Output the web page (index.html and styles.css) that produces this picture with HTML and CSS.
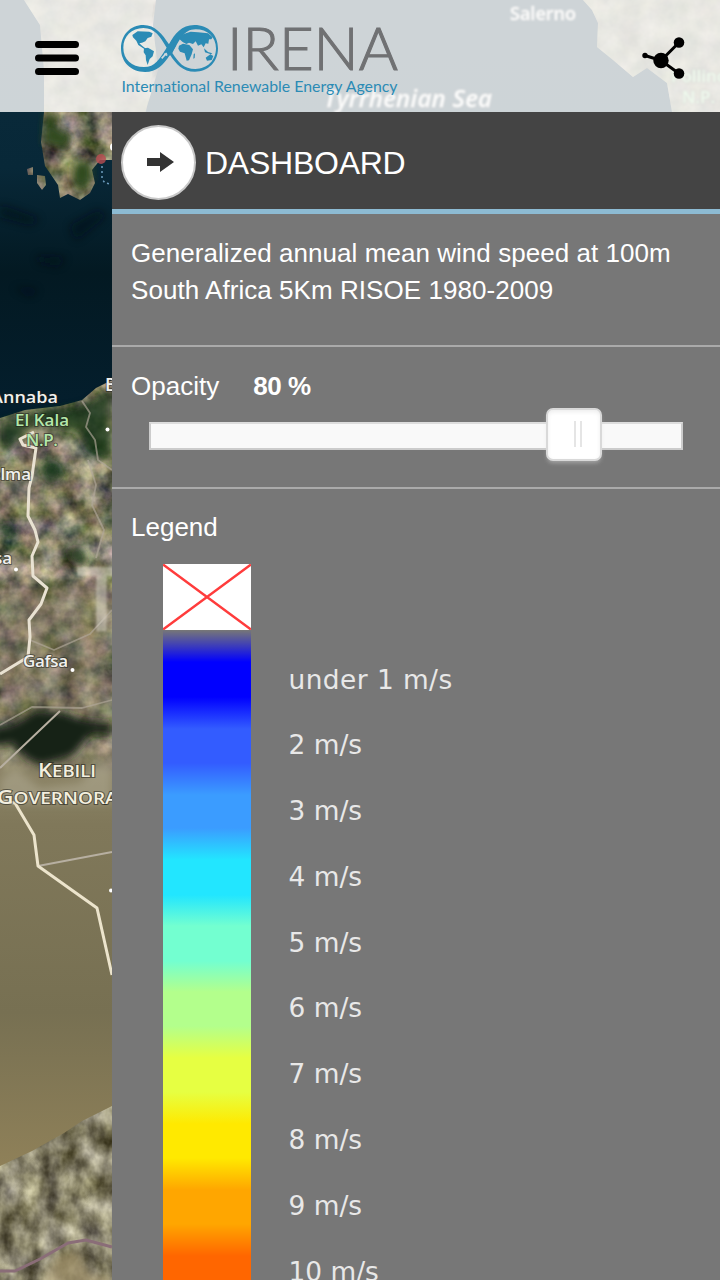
FILE: index.html
```html
<!DOCTYPE html>
<html lang="en">
<head>
<meta charset="utf-8">
<title>IRENA Dashboard</title>
<link rel="stylesheet" href="styles.css">
</head>
<body>
<div class="app">
  <svg class="map" viewBox="0 0 720 1280" aria-hidden="true">
    <defs>
      <linearGradient id="sea" x1="0" y1="0" x2="0" y2="1">
        <stop offset="0" stop-color="#0b2b3b"/><stop offset=".4" stop-color="#082838"/><stop offset=".65" stop-color="#031922"/><stop offset="1" stop-color="#041f2e"/>
      </linearGradient>
      <linearGradient id="desert" x1="0" y1="0" x2="0" y2="1">
        <stop offset="0" stop-color="#989074" stop-opacity="0"/><stop offset=".1" stop-color="#8b8365"/><stop offset=".2" stop-color="#80785a"/><stop offset=".6" stop-color="#777052"/><stop offset="1" stop-color="#94845a"/>
      </linearGradient>
      <filter id="terrain" x="0" y="0" width="1" height="1" color-interpolation-filters="sRGB">
        <feTurbulence type="fractalNoise" baseFrequency=".05" numOctaves="4" seed="8"/>
        <feColorMatrix values=".9 0 0 0 .04  .75 .2 0 0 0  .65 0 .25 0 -.06  0 0 0 0 1"/>
        <feComposite in2="SourceGraphic" operator="in"/>
      </filter>
      <filter id="ridge" x="0" y="0" width="1" height="1" color-interpolation-filters="sRGB">
        <feTurbulence type="fractalNoise" baseFrequency=".05 .04" numOctaves="4" seed="3"/>
        <feColorMatrix values=".85 0 0 0 .1  .85 0 0 0 .08  .78 .1 0 0 -.03  0 0 0 0 1"/>
        <feComposite in2="SourceGraphic" operator="in"/>
      </filter>
      <filter id="soft" x="-30%" y="-30%" width="160%" height="160%"><feGaussianBlur stdDeviation="4"/></filter>
      <filter id="slight"><feGaussianBlur stdDeviation=".8"/></filter>
    </defs>
    <rect width="720" height="420" fill="url(#sea)"/>
    <g filter="url(#soft)" fill="#010f16" opacity=".6">
      <path d="M0 205l18 6 22 8-10 6-30-8zM38 256l28 2-8 8-20-4zM70 226l28-16 8 6-30 24zM14 288l24 2-8 6z"/>
    </g>
    <path fill="#8c8a66" d="M24 0L40 25l4 45 0 42-3 30 4 24 13 19 2 13 8-4 12 6 10-7 5-10-3-13 8-10h28l15-40 15-50-5-45 3-25zM27 169l6-2v8l-5 0zM37 175l8 1 1 9-4 5-5-7z" filter="url(#terrain)"/>
    <g filter="url(#soft)" fill="#2f4a1f"><path d="M46 112h10l-2 14 18 10-6 12-22-4zM74 162l16-2 2 20-14 12-6-14z"/></g>
    <path fill="#8c8a6a" filter="url(#terrain)" d="M583 0l9 10 6 13-1 24 16 13 20 17 14-9 20 15 5 29h48V0z"/>
    <path fill="#9a9a7a" d="M583 0l9 10 6 13-1 24 16 13 20 17 14-9 20 15 5 29h48V0z" opacity=".5"/>
    <path fill="#a5a387" d="M24 0L40 25l4 45v42h102l10-62-5-25 3-25z" opacity=".5"/>

    <path filter="url(#terrain)" fill="#fff" d="M0 418l25-8 35-4 22-6 14-12 16-8v420H0z"/>
    <g filter="url(#soft)" fill="#183613" opacity=".8">
      <path d="M0 422l45-10 38-6 29-18v74l-25-10-10-20-40-8L0 455zM40 465l15-4 10 16-18 6zM65 550l16-4 8 14-14 6zM0 524h14l2 8-16 4z"/>
    </g>
    <path filter="url(#soft)" fill="#877964" d="M0 590l112-10v145L0 740z" opacity=".35"/>
    <path fill="url(#desert)" d="M0 730h112v470H0z"/>
    <g filter="url(#soft)" fill="#172018">
      <path d="M-8 728l20-4 24-14 25 2 24 8 27 2v14l-20-2-8 8-10 13-12 5-22 5-14-6-14-15-20 3z"/>
    </g>
    <path filter="url(#soft)" fill="#b4ae98" d="M0 780l15-12 25 20 40-5 16-20 16 4v36H0z" opacity=".5"/>
    <path filter="url(#ridge)" fill="#fff" d="M0 1166l32-15 32-18 18-12 30-15v174H0z"/>
    <path filter="url(#soft)" fill="#a09069" d="M45 1280l10-22 22-8 12 24 23 4v8H45z" opacity=".7"/>
    <g fill="none" stroke-linejoin="round">
      <path d="M0 1271h15l25-12 28-16 18-3 26 7" stroke="#8a6d78" stroke-width="3"/>
      <path d="M82 401l8 12-4 14 9 13 3 20 14 10M88 460l8 25-4 20 12 25-8 28M112 610l-22 24-36 16-24-10M112 700l-30 8-50-1-32 18" stroke="#b1a89a" stroke-width="1.8" opacity=".65"/>
      <path d="M60 711L0 768M38 866l74-14" stroke="#b7afa1" stroke-width="2"/>
      <path d="M0 674l28-17 2-20-1-17 12-16 6-16-14-12-1-20 6-14-3-12-7-14 1-28 3-12 4-28-13-3-3-6 14-7" stroke="#e9e2d2" stroke-width="3"/>
      <path d="M0 801l15 2 19 32 4 31 59 42 15 67" stroke="#ece4cc" stroke-width="3"/>
    </g>
    <g class="place" filter="url(#slight)">
      <text x="510" y="20" font-size="18" textLength="66">Salerno</text>
      <text x="324" y="107" font-size="24" font-style="italic" textLength="168">Tyrrhenian Sea</text>
      <text class="park" x="671" y="82" font-size="17">Pollino</text>
      <text class="park" x="682" y="103" font-size="17">N.P.</text>
      <text class="country" x="76" y="632" font-size="90">T</text>
    </g>
    <g class="place">
      <text x="-9" y="403" font-size="17" textLength="67" lengthAdjust="spacingAndGlyphs">Annaba</text>
      <text class="park" x="15" y="426" font-size="17" textLength="54">El Kala</text>
      <text class="park" x="26" y="446" font-size="17" textLength="32">N.P.</text>
      <text x="105" y="391" font-size="18">B</text>
      <text x="-32" y="480" font-size="17" textLength="63">Guelma</text>
      <text x="-6" y="564" font-size="17">sa</text>
      <text x="23" y="667" font-size="17" textLength="45">Gafsa</text>
      <text class="region" x="38" y="777" textLength="58" lengthAdjust="spacingAndGlyphs">K<tspan class="cap">EBILI</tspan></text>
      <text class="region" x="-3" y="804" textLength="142" lengthAdjust="spacingAndGlyphs">G<tspan class="cap">OVERNORATE</tspan></text>
    </g>
    <g fill="#fff"><circle cx="107.500" cy="429.500" r="2"/><circle cx="16" cy="569.500" r="2"/><circle cx="72.500" cy="670" r="2"/><circle cx="111" cy="890.500" r="2"/><circle cx="114" cy="147" r="4"/></g>
    <circle cx="101" cy="159" r="5" fill="#b94c51" opacity=".8"/>
    <path d="M102 166v13l3 4 6 1" fill="none" stroke="#6d9dbe" stroke-width="1.500" stroke-dasharray="2 3"/>
  </svg>

  <header class="topbar">
    <svg class="menu" width="44" height="34" viewBox="0 0 44 34"><path d="M3.500 3.500h37M3.500 17h37M3.500 30.500h37" stroke="#000" stroke-width="7" stroke-linecap="round"/></svg>
    <svg class="logo" width="280" height="76" viewBox="120 24 280 76">
      <g transform="scale(.33333)" fill="#2b8bb5">
        <path fill-rule="evenodd" d="M363 145C363 105 391 75 430 75C466 75 487 103 507 133C524 101 545 75 583 75C626 75 654 105 654 145C654 187 624 215 585 215C548 215 528 192 510 164C490 195 470 216 435 216C393 216 363 187 363 145ZM370 143C370 178 395 201 432 201C466 201 477 178 500 143C480 111 466 84 430 84C395 84 370 109 370 143ZM517 159C536 188 551 207 586 207C622 207 648 181 648 145C648 111 622 88 587 88C550 88 539 121 517 159Z"/>
        <path d="M500 144l18-26 9 20-15 28-18 2z"/>
        <path d="M397 105l16-11 35 1 10 5-4 10-11 4-7 10-10 4-8 2 9 8 9 7-3 2-18-12-6-13-10-10zM432 145l12-2 18 11-4 15-9 8-6 18-5-15-1-14-6-9z"/>
        <path d="M538 117l8-13 14-5 12-4 22 2 30 3 14 12-4 6-7 0-2 13-8-1-6 12-7-9-10 4-7-13-8 8-12-4-8 4-11-6zM537 137l12-6 19 4 11 13-4 15-8 18-7 1-6-22-14-5-5-9zM617 173l14-10 9 5-5 12-14 2zM612 145l12 11 13 4-4 3-18-6zM581 163l4-3-1 14-4 2z"/>
        <path d="M500 159l-15 16M502 166l-10-4" stroke="#d4dadd" stroke-width="5"/>
      </g>
      <text class="logo-name" x="227" y="69.500" textLength="171" lengthAdjust="spacingAndGlyphs">IRENA</text>
      <text class="logo-sub" x="121.500" y="92" textLength="276" lengthAdjust="spacingAndGlyphs">International Renewable Energy Agency</text>
    </svg>
    <svg class="share" width="44" height="44" viewBox="642 36 44 44"><path d="M645 55.500l16 5 18-18M661 60.500l18 13" fill="none" stroke="#000" stroke-width="3"/><circle cx="645" cy="55.500" r="2.700"/><circle cx="661" cy="60.500" r="7.700"/><circle cx="679" cy="42.500" r="5.300"/><circle cx="679" cy="73.500" r="5.300"/></svg>
  </header>

  <main class="panel">
    <div class="panel-head">
      <span class="back"><svg width="28" height="22" viewBox="0 0 28 22"><path d="M0 7h13V1l14 10-14 10v-6H0z" fill="#333"/></svg></span>
      <h1 class="title">DASHBOARD</h1>
    </div>
    <section class="layer-name">Generalized annual mean wind speed at 100m<br>South Africa 5Km RISOE 1980-2009</section>
    <section class="opacity">
      <div class="opacity-label"><span>Opacity</span><strong>80 %</strong></div>
      <div class="track"><span class="handle"><i class="grip"></i></span></div>
    </section>
    <section class="legend">
      <h2 class="legend-title">Legend</h2>
      <div class="legend-body">
        <div class="scale">
          <svg width="88" height="66" viewBox="0 0 88 66"><path fill="#fff" d="M0 0h88v66H0z"/><path d="M0 .500l88 65M88 .500l-88 65" stroke="#ff3c3c" stroke-width="2.500"/></svg>
          <div class="ramp"></div>
        </div>
        <ul class="labels">
          <li class="first">under 1 m/s</li><li>2 m/s</li><li>3 m/s</li><li>4 m/s</li><li>5 m/s</li><li>6 m/s</li><li>7 m/s</li><li>8 m/s</li><li>9 m/s</li><li>10 m/s</li>
        </ul>
      </div>
    </section>
  </main>
</div>
</body>
</html>
```
FILE: styles.css
```css
* { box-sizing: border-box; }
body { margin: 0; font-family: "Liberation Sans", Arial, sans-serif; }
.app { position: relative; width: 720px; height: 1280px; overflow: hidden; display: flex; flex-direction: column; }
.map { position: absolute; inset: 0; width: 720px; height: 1280px; }
.place { font-family: "Open Sans", "Noto Sans", sans-serif; font-weight: 600; fill: #f1f1ee; paint-order: stroke; stroke: rgba(30, 30, 25, .55); stroke-width: 2px; }
.park { fill: #b4e8ab; }
.region { font-size: 19px; fill: #f3efdf; }
.cap { font-size: 16px; }
.country { font-weight: 600; fill: rgba(225, 220, 205, .5); stroke: none; }

.topbar { position: relative; flex: none; height: 112px; padding: 0 34px; display: flex; align-items: center; background: rgba(255, 255, 255, .8); }
.menu { margin: 4px 43px 0 1px; fill: none; }
.logo { margin-top: 12px; margin-left: -2px; }
.logo-name { font: 300 59px Lato, "Liberation Sans", sans-serif; fill: #707173; stroke: #707173; stroke-width: 1.1px; }
.logo-sub { font: 400 14.500px Lato, "Liberation Sans", sans-serif; font-variant-ligatures: none; fill: #2b8bb5; }
.share { margin: 4px 0 0 auto; }

.panel { position: relative; flex: 1; min-height: 0; margin-left: 112px; background: #777; color: #fff; font-size: 26px; overflow: hidden; }
.panel-head { height: 102px; display: flex; align-items: center; gap: 9px; padding-left: 9px; background: #444; border-bottom: 5px solid #8dbbd3; }
.back { width: 75px; height: 75px; margin-top: 3px; border: 2px solid #c8c8c8; border-radius: 50%; background: #fff; display: flex; align-items: center; justify-content: center; padding-left: 5px; }
.title { margin: 5px 0 0; font-size: 32px; line-height: 40px; font-weight: 400; letter-spacing: -.25px; }
.layer-name { height: 133px; padding: 21px 19px 0; line-height: 37px; letter-spacing: .05px; white-space: nowrap; border-bottom: 2px solid #aaa; }
.opacity { height: 142px; padding: 21px 37px 0; border-bottom: 2px solid #aaa; }
.opacity-label { display: flex; gap: 34px; margin-left: -18px; line-height: 36px; }
.opacity-label strong { letter-spacing: -.4px; }
.track { margin-top: 18px; height: 28px; width: 534px; border: 2px solid #ccc; border-top-color: #ddd; background: #f9f9f9; display: flex; align-items: center; padding-left: 395px; }
.handle { flex: none; width: 56px; height: 53px; margin-top: -4px; border: 2px solid #d9d9d9; border-radius: 7px; background: #fff; box-shadow: 0 3px 4px -1px rgba(220, 220, 220, .45), inset 0 2px 4px #eee; display: flex; align-items: center; padding-left: 26px; }
.grip { width: 8px; height: 26px; border: solid #e5e5e5; border-width: 0 2px; }
.legend { padding: 20px 19px 0; }
.legend-title { margin: 0; font-size: 26px; line-height: 36px; font-weight: 400; }
.legend-body { margin: 19px 0 0 32px; display: flex; gap: 37.500px; }
.scale { display: flex; flex-direction: column; }
.ramp { width: 88px; height: 660px; background: linear-gradient(rgba(0, 0, 255, 0) 0, #00f 32px, #00f 67px, #335cff 99px, #335cff 133px, #3b9cff 165px, #3b9cff 198px, #22e6ff 230px, #22e6ff 265px, #73ffd0 296px, #73ffd0 331px, #b3ff8c 362px, #b3ff8c 396px, #e6ff42 428px, #e6ff42 462px, #ffe900 494px, #ffe900 528px, #ffa600 560px, #ffa600 594px, #f60 626px); }
.labels { margin: 0; padding: 82.500px 0 0; list-style: none; font-family: "DejaVu Sans", sans-serif; font-size: 26.400px; color: #e8e8e8; }
.labels li { height: 65.800px; line-height: 65.800px; white-space: nowrap; }
.labels .first { letter-spacing: .45px; }
```
